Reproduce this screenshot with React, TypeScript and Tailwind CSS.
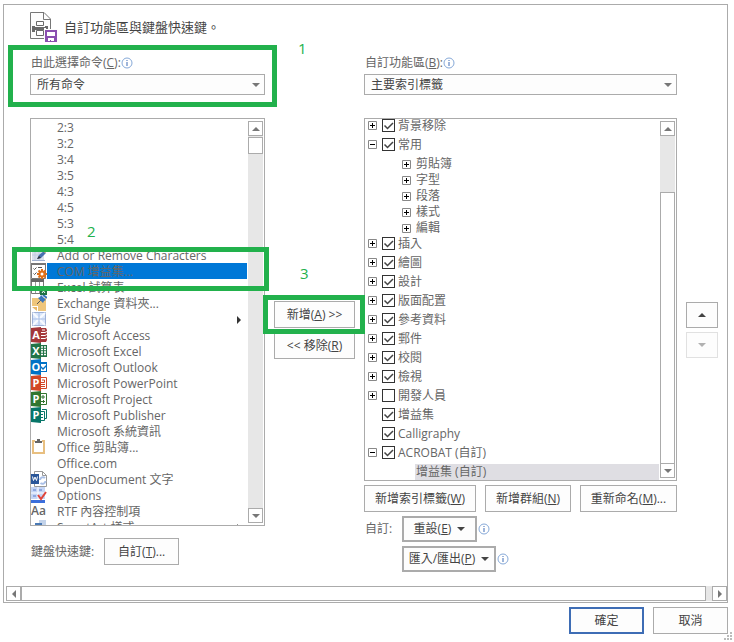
import type { ReactNode } from 'react';
import { clsx } from 'clsx';

type Direction = 'up' | 'down' | 'left' | 'right';

const trianglePaths: Record<Direction, string> = {
  up: 'M4 2 L8 6 H0 Z',
  down: 'M0 2 H8 L4 6 Z',
  left: 'M6 0 V8 L2 4 Z',
  right: 'M2 0 L6 4 L2 8 Z',
};

function Triangle({ direction, className }: { direction: Direction; className?: string }) {
  return (
    <svg
      viewBox="0 0 8 8"
      className={clsx('size-2 shrink-0 fill-current', className)}
      aria-hidden="true"
    >
      <path d={trianglePaths[direction]} />
    </svg>
  );
}

function InfoIcon() {
  return (
    <svg viewBox="0 0 12 12" className="size-3 shrink-0" aria-hidden="true">
      <circle cx="6" cy="6" r="5" fill="#fff" stroke="#86a9d8" />
      <path d="M5.500 5h1v4h-1z M5.500 3h1v1h-1z" fill="#3f6db5" />
    </svg>
  );
}

function HeaderIcon() {
  return (
    <svg viewBox="0 0 28 30" className="h-[30px] w-7 shrink-0" aria-hidden="true">
      <path d="M.5 .5H14l6.500 6.500V26.500H.5Z" fill="#fdfdfd" stroke="#777" />
      <path d="M13.500 .5V7.500H20.500" fill="none" stroke="#777" />
      <path d="M2 14h16v6H2z" fill="#6a6a6a" />
      <path d="M5 9h10v6H5z" fill="#fdfdfd" />
      <path d="M6.500 9.500h7v4h-7z" fill="#fff" stroke="#6a6a6a" />
      <path d="M4 15.500h12" stroke="#6a6a6a" />
      <path d="M14 16h2v1h-2z" fill="#fff" />
      <path d="M5 18h10v3H5z" fill="#fdfdfd" />
      <path d="M6.500 18.500h7v5h-7z" fill="#fff" stroke="#6a6a6a" />
      <path d="M14 17h14v13H14z" fill="#fdfdfd" />
      <path d="M16 19h10v10H16z" fill="#fff" stroke="#8a4fb0" strokeWidth="2" />
      <path d="M15 24h12v6H15z" fill="#8a4fb0" />
      <path d="M18 26h6v3h-3v-1h-1v1h-2z" fill="#fff" />
    </svg>
  );
}

function Glyph({ children }: { children: ReactNode }) {
  return (
    <svg viewBox="0 0 16 16" className="size-4 shrink-0" aria-hidden="true">
      {children}
    </svg>
  );
}

function OfficeIcon({ letter, fill, children }: { letter: string; fill: string; children: ReactNode }) {
  return (
    <Glyph>
      {children}
      <path d="M0 1 L10 0 V16 L0 15Z" fill={fill} />
      <text
        x="5"
        y="12"
        textAnchor="middle"
        fontSize="11"
        fontWeight="700"
        fill="#fff"
        fontFamily="Open Sans, sans-serif"
      >
        {letter}
      </text>
    </Glyph>
  );
}

const editIcon = (
  <Glyph>
    <path d="M1 0h12v14H1z" fill="#d9dfec" />
    <path d="M1 4h12M1 8h12M4 0v14M8 0v14" stroke="#c3cce0" />
    <path d="M1 13.500h13" stroke="#9fb1d1" />
    <path d="M6 12l2-4 5-4 2 2-5 5z" fill="#4870b0" />
    <path d="M6 12l2-3 2 2z" fill="#333" />
    <path d="M12 4l2-2 2 2-2 2z" fill="#e9ad52" />
  </Glyph>
);

const comIcon = (
  <Glyph>
    <path d="M.5 .5h14v15H.5z" fill="#fff" stroke="#777" />
    <path d="M0 0h15v2H0z" fill="#777" />
    <path d="M2.500 5.500l1 1 2-2M2.500 10.500l1 1 2-2M7 4.500h4" fill="none" stroke="#555" />
    <g stroke="#e07018" strokeWidth="2">
      <path d="M11 6v10M6 11h10M7.500 7.500l7 7M14.500 7.500l-7 7" />
    </g>
    <circle cx="11" cy="11" r="3.500" fill="#e07018" />
    <circle cx="11" cy="11" r="1.500" fill="#fff" />
  </Glyph>
);

const sheetIcon = (
  <Glyph>
    <path d="M.5 .5h12v14H.5z" fill="#fff" stroke="#777" />
    <path d="M0 0h13v3H0z" fill="#666" />
    <path d="M0 7.500h13M0 11.500h13M4.500 3v11M8.500 3v11" stroke="#999" />
    <path d="M9 8h7v8H9z" fill="#1f7246" />
    <path d="M11 10l3 4M14 10l-3 4" stroke="#fff" />
  </Glyph>
);

const noteIcon = (
  <Glyph>
    <path d="M1 3h14v13H7v-5H1z" fill="#efc67c" />
    <path d="M1 12h5v4z" fill="#e8b868" />
    <path d="M6 9l4-4" stroke="#555" />
    <path d="M10 0l5 5-2 1-1 2-5-5 2-1z" fill="#3a75bb" />
    <path d="M12 0l4 3" stroke="#3a75bb" strokeWidth="2" />
  </Glyph>
);

const gridIcon = (
  <Glyph>
    <path d="M1.500 1.500h13v13h-13z" fill="#dbe7fb" stroke="#9fb1d6" />
    <path d="M2 2l12 12M14 2L2 14" stroke="#f8fbff" strokeWidth="2" />
    <path d="M8 2v12M2 8h12" stroke="#a9bfe6" />
  </Glyph>
);

const clipboardIcon = (
  <Glyph>
    <path d="M2 2h11v12H2z" fill="#fff" stroke="#e8bf80" strokeWidth="2" />
    <path d="M4 0h7v3H4z" fill="#fff" />
    <path d="M4 4V2h2V0h3v2h2v2z" fill="#666" />
  </Glyph>
);

const openDocumentIcon = (
  <Glyph>
    <path d="M3.500 .5h8l4 4v11h-12z" fill="#fff" stroke="#999" />
    <path d="M11.500 .5v4h4" fill="none" stroke="#999" />
    <path d="M9 9a3 3 0 0 1 5-2M14.500 10a3 3 0 0 1-5 2" fill="none" stroke="#a9bfe6" strokeWidth="2" />
    <path d="M0 3h8v10H0z" fill="#2a5699" />
    <path d="M1.500 5.500l1 4 1.500-3.500 1.500 3.500 1-4" fill="none" stroke="#fff" />
  </Glyph>
);

const optionsIcon = (
  <Glyph>
    <path d="M0 0h14v12H0z" fill="#c5d5f5" />
    <path d="M0 13h14v3H0z" fill="#3b6fdc" />
    <path d="M2 3h3M8 3h3M2 9h3" stroke="#8fa8e0" strokeWidth="2" />
    <path d="M0 6h14M7 0v12" stroke="#fff" />
    <path d="M7 8l3 4 5-7" fill="none" stroke="#e0453a" strokeWidth="2" />
  </Glyph>
);

const smartArtIcon = (
  <Glyph>
    <path d="M8 1h7v8H8z" fill="#c3d3ea" />
    <path d="M4 4h7v9H4z" fill="#4a7ab5" />
  </Glyph>
);

interface Command {
  name: string;
  icon?: ReactNode;
  submenu?: boolean;
  selected?: boolean;
}

const commands: Command[] = [
  { name: '2:3' },
  { name: '3:2' },
  { name: '3:4' },
  { name: '3:5' },
  { name: '4:3' },
  { name: '4:5' },
  { name: '5:3' },
  { name: '5:4' },
  { name: 'Add or Remove Characters', icon: editIcon },
  { name: 'COM 增益集...', icon: comIcon, selected: true },
  { name: 'Excel 試算表', icon: sheetIcon },
  { name: 'Exchange 資料夾...', icon: noteIcon },
  { name: 'Grid Style', icon: gridIcon, submenu: true },
  {
    name: 'Microsoft Access',
    icon: (
      <OfficeIcon letter="A" fill="#a4373a">
        <path d="M10 1h5l1 2v10l-1 2h-5z" fill="#a4373a" />
        <path d="M10 5.500h4l2-1M10 8.500h4l2-1M10 11.500h4l2-1M11 3h3" fill="none" stroke="#fff" />
      </OfficeIcon>
    ),
  },
  {
    name: 'Microsoft Excel',
    icon: (
      <OfficeIcon letter="X" fill="#217346">
        <path d="M9 2h7v12H9z" fill="#217346" />
        <path d="M10 4h2M13 4h2M10 6.500h2M13 6.500h2M10 9h2M13 9h2M10 11.500h2M13 11.500h2" stroke="#fff" strokeWidth="1.500" />
      </OfficeIcon>
    ),
  },
  {
    name: 'Microsoft Outlook',
    icon: (
      <OfficeIcon letter="O" fill="#0072c6">
        <path d="M9 3h7v10H9z" fill="#0072c6" />
        <path d="M10 5h5v1l-3 3-2-2zM10 9l2 2 3-3v4h-5z" fill="#fff" />
      </OfficeIcon>
    ),
  },
  {
    name: 'Microsoft PowerPoint',
    icon: (
      <OfficeIcon letter="P" fill="#d24726">
        <path d="M9 2.500h6.500v11H9" fill="#fff" stroke="#d24726" />
        <path d="M10 9.500h4M10 11.500h4M11 5h2.500v2.500H10" fill="none" stroke="#d24726" />
      </OfficeIcon>
    ),
  },
  {
    name: 'Microsoft Project',
    icon: (
      <OfficeIcon letter="P" fill="#31752f">
        <path d="M9 2.500h6.500v11H9" fill="#fff" stroke="#31752f" />
        <path d="M10 6h4M10 10.500h4M12 4v4M12.500 9v3" stroke="#31752f" />
      </OfficeIcon>
    ),
  },
  {
    name: 'Microsoft Publisher',
    icon: (
      <OfficeIcon letter="P" fill="#077568">
        <path d="M11 2.500h4.500v9H13" fill="#fff" stroke="#077568" />
        <path d="M9 4.500h4.500v9H9" fill="#fff" stroke="#077568" />
        <path d="M10 7.500h2M10 10.500h2" stroke="#077568" />
      </OfficeIcon>
    ),
  },
  { name: 'Microsoft 系統資訊' },
  { name: 'Office 剪貼簿...', icon: clipboardIcon },
  { name: 'Office.com' },
  { name: 'OpenDocument 文字', icon: openDocumentIcon },
  { name: 'Options', icon: optionsIcon },
  { name: 'RTF 內容控制項', icon: <span className="font-semibold text-[#666]">Aa</span> },
  { name: 'SmartArt 樣式', icon: smartArtIcon, submenu: true },
];

interface Tab {
  name: string;
  checked?: boolean;
  state?: 'open' | 'closed';
  groups?: string[];
}

const tabs: Tab[] = [
  { name: '背景移除', checked: true, state: 'closed' },
  { name: '常用', checked: true, state: 'open', groups: ['剪貼簿', '字型', '段落', '樣式', '編輯'] },
  { name: '插入', checked: true, state: 'closed' },
  { name: '繪圖', checked: true, state: 'closed' },
  { name: '設計', checked: true, state: 'closed' },
  { name: '版面配置', checked: true, state: 'closed' },
  { name: '參考資料', checked: true, state: 'closed' },
  { name: '郵件', checked: true, state: 'closed' },
  { name: '校閱', checked: true, state: 'closed' },
  { name: '檢視', checked: true, state: 'closed' },
  { name: '開發人員', checked: false, state: 'closed' },
  { name: '增益集', checked: true },
  { name: 'Calligraphy', checked: true },
  { name: 'ACROBAT (自訂)', checked: true, state: 'open' },
];

function Button({ children, className, label }: { children: ReactNode; className?: string; label?: string }) {
  return (
    <button
      type="button"
      aria-label={label}
      className={clsx(
        'flex items-center justify-center whitespace-nowrap bg-[#fdfdfd] text-[#444]',
        className
      )}
    >
      {children}
    </button>
  );
}

function ScrollButton({ direction }: { direction: Direction }) {
  return (
    <button
      type="button"
      aria-label={`Scroll ${direction}`}
      className="flex size-[15px] shrink-0 items-center justify-center border border-[#ababab] bg-white text-[#777]"
    >
      <Triangle direction={direction} />
    </button>
  );
}

function Dropdown({ id, value }: { id: string; value: string }) {
  return (
    <div className="mt-[3px] grid items-center">
      <select
        id={id}
        className="col-start-1 row-start-1 h-[21px] w-full appearance-none border border-[#ababab] bg-[#fdfdfd] px-1.5 text-xs text-[#444]"
      >
        <option>{value}</option>
      </select>
      <Triangle
        direction="down"
        className="pointer-events-none col-start-1 row-start-1 mr-[5px] justify-self-end text-[#777]"
      />
    </div>
  );
}

function Expander({ open }: { open?: boolean }) {
  return (
    <button
      type="button"
      aria-label={open ? 'Collapse' : 'Expand'}
      className="size-[9px] shrink-0"
    >
      <svg viewBox="0 0 9 9" className="size-[9px]" aria-hidden="true">
        <path d="M.5 .5h8v8h-8z" fill="#fff" stroke="#888" />
        <path d={open ? 'M2 4.500h5' : 'M2 4.500h5M4.500 2v5'} stroke="#000" />
      </svg>
    </button>
  );
}

function TabRow({ tab }: { tab: Tab }) {
  return (
    <li>
      <div className="flex h-[19px] items-center pl-[3px]">
        {tab.state ? <Expander open={tab.state === 'open'} /> : <span className="w-[9px]" />}
        <label className="ml-[5px] flex items-center gap-[3px]">
          <span className="grid size-[13px]">
            <input
              type="checkbox"
              defaultChecked={tab.checked}
              className="peer col-start-1 row-start-1 size-[13px] appearance-none border border-[#333] bg-white"
            />
            <svg
              viewBox="0 0 13 13"
              className="pointer-events-none invisible col-start-1 row-start-1 size-[13px] peer-checked:visible"
              aria-hidden="true"
            >
              <path d="M2.500 6.500l3 3L11 4" fill="none" stroke="#444" strokeWidth="1.500" />
            </svg>
          </span>
          <span>{tab.name}</span>
        </label>
      </div>
      {tab.groups && (
        <ul className="-mb-0.5 pt-0.5">
          {tab.groups.map((group) => (
            <li key={group} className="flex h-4 items-center gap-[5px] pl-[37px]">
              <Expander />
              {group}
            </li>
          ))}
        </ul>
      )}
    </li>
  );
}

function CommandList() {
  return (
    <div className="flex h-[408px] overflow-hidden border border-[#ababab] bg-white">
      <ul className="min-w-0 flex-1">
        {commands.map((command) => (
          <li key={command.name} className="flex h-4">
            <span className="flex w-4 shrink-0 items-center">{command.icon}</span>
            <span
              className={clsx(
                'flex flex-1 items-center justify-between whitespace-nowrap pt-0.5 pr-1 pl-2.5',
                command.selected && 'bg-[#0078d7]'
              )}
            >
              {command.name}
              {command.submenu && <Triangle direction="right" className="text-[#333]" />}
            </span>
          </li>
        ))}
      </ul>
      <div className="my-0.5 mr-px ml-px flex w-[15px] flex-col bg-[#e7e7e7]">
        <ScrollButton direction="up" />
        <div className="mt-px h-[17px] border border-[#ababab] bg-white" />
        <div className="flex-1" />
        <ScrollButton direction="down" />
      </div>
    </div>
  );
}

function TabTree() {
  return (
    <div className="mt-[23px] flex h-[363px] overflow-hidden border border-[#ababab] bg-white">
      <ul className="-mt-[3px] min-w-0 flex-1">
        {tabs.map((tab) => (
          <TabRow key={tab.name} tab={tab} />
        ))}
        <li className="mt-0.5 ml-[50px] flex h-4 items-center bg-[#dfdee3] pl-px">增益集 (自訂)</li>
      </ul>
      <div className="my-0.5 mr-px ml-px flex w-[15px] flex-col bg-[#e7e7e7]">
        <ScrollButton direction="up" />
        <div className="h-14" />
        <div className="flex-1 border border-b-0 border-[#ababab] bg-white" />
        <ScrollButton direction="down" />
      </div>
    </div>
  );
}

// Highlight frame laid over the control it points at
function Frame({ className }: { className: string }) {
  return (
    <div className={clsx('pointer-events-none absolute z-10 border-[5px] border-[#22b14c]', className)} />
  );
}

function Step({ n, className }: { n: number; className: string }) {
  return (
    <span className={clsx('absolute z-10 text-[15px] leading-4 text-[#22b14c]', className)}>{n}</span>
  );
}

export default function App() {
  return (
    <div className="relative bg-white pt-1 pr-1.5 pb-2 pl-[3px] font-['Open_Sans','Noto_Sans_CJK_TC',sans-serif] text-xs leading-4 text-[#666]">
      <main className="border border-[#ababab] pb-px">
        <div className="pt-[7px] pr-[9px] pl-[26px]">
          <header className="flex items-center gap-1.5">
            <HeaderIcon />
            <h1 className="text-[13px] text-[#444]">自訂功能區與鍵盤快速鍵。</h1>
          </header>

          <div className="mt-[13px] grid grid-cols-[minmax(0,235fr)_81px_minmax(0,313fr)_32px] gap-x-[9px]">
            {/* Available commands */}
            <section>
              <div className="relative">
                <label htmlFor="source" className="flex items-center pl-px">
                  <span>
                    由此選擇命令(<u>C</u>):
                  </span>
                  <InfoIcon />
                </label>
                <Dropdown id="source" value="所有命令" />
                <Frame className="-top-2.5 -right-3 -bottom-3 -left-[22px]" />
                <Step n={1} className="-top-[15px] left-[268px]" />
              </div>
              <div className="relative mt-[23px]">
                <CommandList />
                <Frame className="top-[129px] -right-1 -left-[18px] h-11" />
                <Step n={2} className="top-[105px] left-[57px]" />
              </div>
              <div className="mt-3 flex items-center gap-2.5 pl-px">
                <span>鍵盤快速鍵:</span>
                <Button className="h-[27px] w-[75px] border border-[#ababab]">
                  <span>
                    自訂(<u>T</u>)...
                  </span>
                </Button>
              </div>
            </section>

            <div className="flex flex-col gap-1 pt-[246px]">
              <div className="relative">
                <Button className="h-[27px] w-full border border-[#ababab]">
                  <span>
                    新增(<u>A</u>) &gt;&gt;
                  </span>
                </Button>
                <Frame className="-top-1.5 -right-2.5 -bottom-1.5 -left-[11px]" />
                <Step n={3} className="-top-9 left-[26px]" />
              </div>
              <Button className="h-[27px] w-full border border-[#ababab]">
                <span>
                  &lt;&lt; 移除(<u>R</u>)
                </span>
              </Button>
            </div>

            {/* Ribbon tabs */}
            <section>
              <label htmlFor="ribbon" className="flex items-center pl-px">
                <span>
                  自訂功能區(<u>B</u>):
                </span>
                <InfoIcon />
              </label>
              <Dropdown id="ribbon" value="主要索引標籤" />
              <TabTree />
              <div className="mt-1 flex justify-between">
                <Button className="h-[27px] w-28 border border-[#ababab]">
                  <span>
                    新增索引標籤(<u>W</u>)
                  </span>
                </Button>
                <Button className="h-[27px] w-[86px] border border-[#ababab]">
                  <span>
                    新增群組(<u>N</u>)
                  </span>
                </Button>
                <Button className="h-[27px] w-[97px] border border-[#ababab]">
                  <span>
                    重新命名(<u>M</u>)...
                  </span>
                </Button>
              </div>
              <div className="mt-1 grid grid-cols-[37px_1fr] items-center gap-y-1 pl-px">
                <span>自訂:</span>
                <div className="flex items-center gap-px">
                  <Button className="h-[26px] w-[75px] gap-1.5 border-2 border-[#ababab]">
                    <span>
                      重設(<u>E</u>)
                    </span>
                    <Triangle direction="down" />
                  </Button>
                  <InfoIcon />
                </div>
                <div className="col-start-2 flex items-center gap-px">
                  <Button className="h-[26px] w-[94px] gap-1.5 border-2 border-[#ababab]">
                    <span>
                      匯入/匯出(<u>P</u>)
                    </span>
                    <Triangle direction="down" />
                  </Button>
                  <InfoIcon />
                </div>
              </div>
            </section>

            <div className="flex flex-col gap-1 pt-[247px]">
              <Button label="Move up" className="h-[26px] border border-[#ababab]">
                <Triangle direction="up" />
              </Button>
              <Button label="Move down" className="h-[26px] border border-[#e1e1e1]">
                <Triangle direction="down" className="text-[#b1b1b1]" />
              </Button>
            </div>
          </div>
        </div>

        <div className="mt-3.5 ml-0.5 flex bg-[#e7e7e7]">
          <ScrollButton direction="left" />
          <div className="mr-1.5 flex-1 border border-[#ababab] bg-white" />
          <ScrollButton direction="right" />
        </div>
      </main>

      <footer className="mt-1 flex justify-end gap-[9px]">
        <Button className="h-[27px] w-[75px] border-2 border-[#3e6db5]">確定</Button>
        <Button className="h-[27px] w-[75px] border border-[#ababab]">取消</Button>
      </footer>

      {/* Resize grip */}
      <svg viewBox="0 0 8 8" className="absolute right-0.5 bottom-0.5 size-2" aria-hidden="true">
        <path d="M6 0h2v2H6zM3 3h2v2H3zM6 3h2v2H6zM0 6h2v2H0zM3 6h2v2H3zM6 6h2v2H6z" fill="#bbb" />
      </svg>
    </div>
  );
}
